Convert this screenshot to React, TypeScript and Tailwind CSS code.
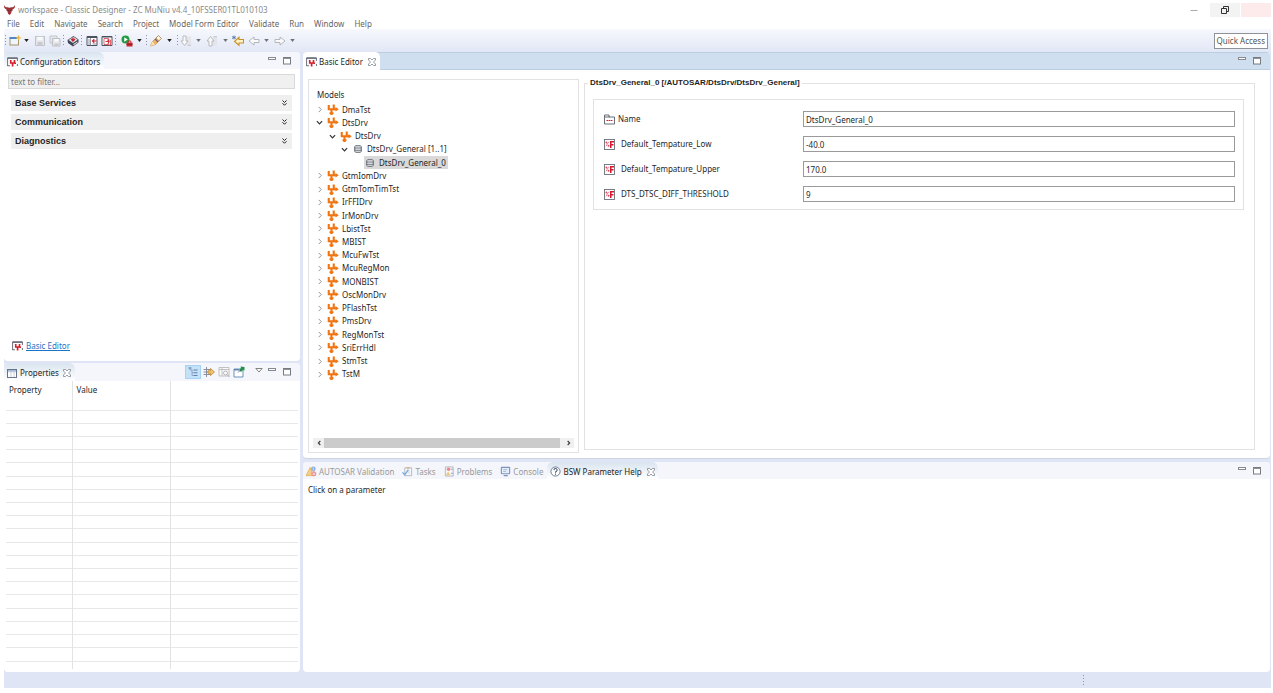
import React, { useState } from "react";

type IconProps = { className?: string };

function Bull() {
  return (
    <svg viewBox="0 0 24 22" className="h-[10px] w-[11px] shrink-0" aria-hidden="true">
      <path d="M0 0c1 4 4 5 8 5l4 1 4-1c4 0 7-1 8-5 .6 5-1 8-4 9l-2 1 2 1-3 2-2 6-3 3-3-3-2-6-3-2 2-1-2-1C1 8-.6 5 0 0z" fill="#9c3236" />
      <path d="M9 11.500l2 1.500M15 11.500l-2 1.500" stroke="#5b2a30" strokeWidth="1.500" />
    </svg>
  );
}

function EditorIcon({ className = "h-[10px] w-[11px]" }: IconProps) {
  return (
    <svg viewBox="0 0 22 20" className={`${className} shrink-0`} aria-hidden="true">
      <path d="M1 1h20v16H1z" fill="#fff" />
      <path d="M1.200 18V2h19.600v6M20.800 14v4M1 17.500h5" fill="none" stroke="#5a606c" strokeWidth="1.800" />
      <path d="M1 1h20v2.500H1z" fill="#5a606c" />
      <path d="M7.500 6v6h7.500V6M11.200 12v7M15 12.500h3" stroke="#d3202c" strokeWidth="3.400" fill="none" />
    </svg>
  );
}

function PropertiesIcon() {
  return (
    <svg viewBox="0 0 20 18" className="h-[9px] w-[10px] shrink-0" aria-hidden="true">
      <rect x="1" y="1" width="18" height="16" fill="#fff" stroke="#66718c" strokeWidth="2" />
      <path d="M2 2h16v3H2z" fill="#a9bad8" />
      <path d="M2 5.500h16M8 6v11M14 6v11" stroke="#a3aec4" strokeWidth="1.200" />
    </svg>
  );
}

function CloseX() {
  return (
    <svg viewBox="0 0 16 16" className="h-2 w-2" aria-hidden="true">
      <path d="M1 1h4l3 3 3-3h4v3l-4 4 4 4v3h-4l-3-3-3 3H1v-3l4-4-4-4z" fill="#fff" stroke="#777c86" strokeWidth="1.500" />
    </svg>
  );
}

function MinIcon() {
  return (
    <svg viewBox="0 0 8 8" className="h-2 w-2" aria-hidden="true">
      <rect x="0.500" y="1.500" width="7" height="2" fill="#fff" stroke="#858a90" />
    </svg>
  );
}

function MaxIcon() {
  return (
    <svg viewBox="0 0 8 8" className="h-2 w-2" aria-hidden="true">
      <rect x="0.500" y="0.500" width="7" height="6.500" fill="#fff" stroke="#777b81" />
      <path d="M0 1.500h8" stroke="#8c9096" />
    </svg>
  );
}

function Caret({ dim }: { dim?: boolean }) {
  return (
    <svg viewBox="0 0 6 4" className="h-[3px] w-[5px]" aria-hidden="true">
      <path d="M0 0h6L3 4z" fill={dim ? "#6f7076" : "#222"} />
    </svg>
  );
}

function ToolIcon({ name }: { name: string }) {
  const art: Record<string, React.ReactNode> = {
    new: (
      <>
        <rect x="2" y="5" width="17" height="15" fill="#eef6fd" stroke="#a08a58" strokeWidth="1.800" />
        <path d="M1.500 4h15v4h-15z" fill="#4f86c6" />
        <path d="M19 1v9M14.500 5.500h9" stroke="#e6b93c" strokeWidth="2.500" />
      </>
    ),
    save: (
      <>
        <path d="M3 3h18v18H3z" fill="#e6e7eb" stroke="#bfc0c6" strokeWidth="2" />
        <path d="M7 3.500h10v7H7z" fill="#fafafc" />
        <path d="M7 14h10v7H7z" fill="#c9cacf" />
      </>
    ),
    saveAll: (
      <>
        <path d="M2 2h14v14H2z" fill="#e6e7eb" stroke="#c4c5cb" strokeWidth="2" />
        <path d="M7 7h15v15H7z" fill="#e6e7eb" stroke="#bfc0c6" strokeWidth="2" />
        <path d="M11 8h8v5h-8z" fill="#fafafc" />
        <path d="M11 17h8v5h-8z" fill="#c9cacf" />
      </>
    ),
    cube: (
      <>
        <path d="M1 10l12-8 10 7v6l-11 8-10-7z" fill="#3f4554" />
        <path d="M3 10l10-6.500 8.500 6L12 16z" fill="#dfe3ea" />
        <path d="M12 5v5M8.500 8l3.500 4 4-4" stroke="#c8202e" strokeWidth="2.600" fill="none" />
        <path d="M13 18l8-5v2l-8 5.500z" fill="#e9ecf1" />
      </>
    ),
    windowArrow: (
      <>
        <path d="M2 3h20v18H2z" fill="#fff" stroke="#4c525f" strokeWidth="2" />
        <path d="M2 3h20v3H2z" fill="#4c525f" />
        <path d="M9 6v15M4 10h4M4 14h4M4 18h4M13 18h8" stroke="#6d7481" strokeWidth="1.500" />
        <path d="M21 12h-7M16.500 8.500L13 12l3.500 3.500" stroke="#cf1f2d" strokeWidth="2.200" fill="none" />
      </>
    ),
    windowSearch: (
      <>
        <path d="M2 3h20v18H2z" fill="#fff" stroke="#4c525f" strokeWidth="2" />
        <path d="M2 3h20v2H2z" fill="#4c525f" />
        <path d="M6 7h9v12H6zM12 10h7v10h-7" stroke="#d8404c" strokeWidth="1.600" fill="none" />
        <path d="M9 13h7M13.500 10l3.500 3.500-3.500 3.500" stroke="#cf1f2d" strokeWidth="1.800" fill="none" />
      </>
    ),
    run: (
      <>
        <circle cx="9" cy="9" r="8" fill="#249a43" />
        <path d="M6.500 4.500l7 4.500-7 4.500z" fill="#fff" />
        <path d="M11 15h12v8H11z" fill="#c62a30" />
        <path d="M14.500 15v-3h5v3" fill="none" stroke="#c62a30" strokeWidth="2" />
        <path d="M11 18.500h12" stroke="#8d1118" strokeWidth="1.500" />
      </>
    ),
    torch: (
      <>
        <path d="M1 22l4-9 8-8 6 6-8 8z" fill="#efb366" stroke="#c98d4b" strokeWidth="1.500" />
        <path d="M12 6l5-5 6 6-6 5z" fill="#fff4d6" stroke="#97795c" strokeWidth="1.500" />
        <path d="M10 8l6 6" stroke="#765f8b" strokeWidth="2.200" />
        <path d="M1 22l4-9 5 6z" fill="#fbe3b4" />
      </>
    ),
    nextNote: (
      <>
        <path d="M11 3h11v16H11z" fill="#e4e5ea" />
        <path d="M6 2h6v10h4l-7 9-7-9h4z" fill="#fafafa" stroke="#b3b4ba" strokeWidth="1.800" />
        <path d="M15 20.500h7" stroke="#b8b9bf" strokeWidth="1.800" fill="none" />
      </>
    ),
    prevNote: (
      <>
        <path d="M11 5h11v16H11z" fill="#e4e5ea" />
        <path d="M6 22h6V12h4L9 3l-7 9h4z" fill="#fafafa" stroke="#b3b4ba" strokeWidth="1.800" />
        <path d="M15 3.500h7" stroke="#b8b9bf" strokeWidth="1.800" fill="none" />
      </>
    ),
    lastEdit: (
      <>
        <path d="M23 9v7H14v4.500L5 13l9-8.500V9z" fill="#fff2c4" stroke="#c4912a" strokeWidth="2.200" />
        <path d="M4 1v8M0 3l8 4M8 3L0 7" stroke="#4669a4" strokeWidth="1.500" />
      </>
    ),
    back: <path d="M22 9v6H12v5l-10-8 10-8v5z" fill="#fafafa" stroke="#aeb0b6" strokeWidth="1.800" />,
    forward: <path d="M2 9v6h10v5l10-8-10-8v5z" fill="#fafafa" stroke="#aeb0b6" strokeWidth="1.800" />,
    tree: (
      <>
        <path d="M6 3v5h5M10 8v11h4M10 13.500h4" stroke="#7d97bb" strokeWidth="1.500" fill="none" />
        <path d="M3 4h6M13 8h8M14 13.500h7M14 19h7" stroke="#55779f" strokeWidth="1.800" />
      </>
    ),
    filter: (
      <>
        <path d="M1 7h14M1 12h10M1 17h14M7 2v20" stroke="#7d8797" strokeWidth="1.800" />
        <path d="M10 9.500h5V5l8 7-8 7v-4.500h-5z" fill="#f3c56a" stroke="#b6812d" strokeWidth="1.500" />
      </>
    ),
    defaults: (
      <>
        <path d="M2 3h20v17H2zM2 7h20M8 3v17" fill="#fafafa" stroke="#bbbbbe" strokeWidth="1.800" />
        <circle cx="15" cy="14" r="4" fill="#fff" stroke="#aaaab0" strokeWidth="1.800" />
        <path d="M18 17l5 5" stroke="#aaaab0" strokeWidth="2" />
      </>
    ),
    pin: (
      <>
        <path d="M2 6h18v16H2z" fill="#fff" stroke="#5f87b6" strokeWidth="1.800" />
        <path d="M2 6h10v3H2z" fill="#5f87b6" />
        <path d="M15 1l8 1v7l-3-1-4 4-4-4 4-4z" fill="#27904a" />
        <path d="M14 9l-4 4" stroke="#44484f" strokeWidth="1.500" />
      </>
    ),
  };
  return (
    <svg viewBox="0 0 24 24" className="h-3 w-3" aria-hidden="true">
      {art[name]}
    </svg>
  );
}

function ForkIcon() {
  return (
    <svg viewBox="0 0 24 22" className="h-[11px] w-3 shrink-0" aria-hidden="true">
      <path d="M3.500 2v8.500h10V1" stroke="#f07410" strokeWidth="4.200" fill="none" />
      <path d="M13 10.500h5M9 11v8" stroke="#f07410" strokeWidth="4.200" />
      <path d="M17 6l6.500 4.500L17 15z" fill="#f07410" />
      <path d="M5 16.500h8v3L10.500 22h-3L5 19.500z" fill="#f07410" />
    </svg>
  );
}

function StackIcon() {
  return (
    <svg viewBox="0 0 16 16" className="mx-[2px] h-2 w-2 shrink-0" aria-hidden="true">
      <path d="M3 1.500h10l1.500 2v9l-1.500 2H3l-1.500-2v-9z" fill="#f2f3f5" stroke="#5e656f" strokeWidth="2" />
      <path d="M1 6h14M1 10.500h14" stroke="#5e656f" strokeWidth="1.800" />
    </svg>
  );
}

function Chevron({ open }: { open?: boolean }) {
  return (
    <svg viewBox="0 0 8 8" className="h-[7px] w-[7px] shrink-0" aria-hidden="true">
      <path d={open ? "M1 2.500l3 3 3-3" : "M3 1L6 4 3 7"} fill="none" stroke={open ? "#333" : "#8f8f8f"} strokeWidth={open ? 1.4 : 1.1} />
    </svg>
  );
}

function FolderIcon() {
  return (
    <svg viewBox="0 0 22 22" className="h-[11px] w-[11px] shrink-0" aria-hidden="true">
      <path d="M1 20V2h9v4h11v14z" fill="#fff" stroke="#565d69" strokeWidth="1.800" />
      <path d="M1 6h10" stroke="#565d69" strokeWidth="1.800" />
      <path d="M5 13h12" stroke="#d3202c" strokeWidth="2.400" strokeDasharray="3.400 1" />
    </svg>
  );
}

function FloatIcon() {
  return (
    <svg viewBox="0 0 22 22" className="h-[11px] w-[11px] shrink-0" aria-hidden="true">
      <rect x="1" y="1" width="20" height="20" fill="#fff" stroke="#6a6f79" strokeWidth="1.800" />
      <path d="M13.500 18V5.500H20M13.500 11.500H19" stroke="#d8172f" strokeWidth="3" fill="none" />
      <path d="M9.500 5.500L4 14.500" stroke="#e0455a" strokeWidth="1.400" />
      <circle cx="4.800" cy="7" r="1.800" fill="#e0455a" />
      <circle cx="9" cy="13.500" r="1.800" fill="#e0455a" />
    </svg>
  );
}

function TabIcon({ name }: { name: string }) {
  const art: Record<string, React.ReactNode> = {
    validation: (
      <>
        <path d="M9 3l8 18H0z" fill="#f3cf85" stroke="#dca94e" strokeWidth="1.500" />
        <circle cx="16" cy="6" r="5" fill="#86a9e6" />
        <circle cx="17" cy="17" r="5.500" fill="#ec8f8f" />
        <path d="M14.500 14.500l5 5M19.500 14.500l-5 5M16 3v6" stroke="#fff" strokeWidth="1.500" />
      </>
    ),
    tasks: (
      <>
        <path d="M6 4h15v17H6z" fill="#f8fafd" stroke="#b4b5ba" strokeWidth="2" />
        <path d="M10 2h7v4h-7z" fill="#d6b98d" />
        <path d="M12 11h6M12 15h6" stroke="#c6cbd6" strokeWidth="1.500" />
        <path d="M1 14l5 5 8-11" fill="none" stroke="#74a9de" strokeWidth="2.800" />
      </>
    ),
    problems: (
      <>
        <path d="M3 2h17v20H3z" fill="#f5f7fb" stroke="#b2b5bd" strokeWidth="2" />
        <circle cx="10" cy="7" r="4" fill="#ea8a8e" />
        <path d="M9 12l5 8H4z" fill="#efc777" />
        <path d="M15 7h5M15 16h5" stroke="#8ca6cf" strokeWidth="2" />
      </>
    ),
    console: (
      <>
        <rect x="3" y="3" width="18" height="14" rx="1" fill="#e7effb" stroke="#7e94c0" strokeWidth="2.500" />
        <path d="M7 8h9M7 12h6" stroke="#8fa2c8" strokeWidth="1.500" />
        <path d="M8 21h9" stroke="#7e94c0" strokeWidth="3" />
      </>
    ),
    help: (
      <>
        <circle cx="12" cy="12" r="10" fill="#fff" stroke="#5b6a80" strokeWidth="1.800" />
        <path d="M8.500 9.500c0-5 7-5 7-.5 0 2.500-3.500 2.500-3.500 5.500M12 16.500v2.500" fill="none" stroke="#3f5878" strokeWidth="2.200" />
      </>
    ),
  };
  return (
    <svg viewBox="0 0 24 24" className="h-[11px] w-[11px] shrink-0" aria-hidden="true">
      {art[name]}
    </svg>
  );
}

type Slot = { kind: "grip" | "icon" | "caret"; width: string; label?: string; icon?: string; dim?: boolean };

const toolbar: Slot[] = [
  { kind: "grip", width: "w-[3px]" },
  { kind: "icon", width: "w-[15px]", icon: "new", label: "New" },
  { kind: "caret", width: "w-[9px]", label: "New menu" },
  { kind: "icon", width: "w-[18px]", icon: "save", label: "Save" },
  { kind: "icon", width: "w-3", icon: "saveAll", label: "Save all" },
  { kind: "grip", width: "w-1" },
  { kind: "icon", width: "w-[15px]", icon: "cube", label: "Generate" },
  { kind: "grip", width: "w-[3px]" },
  { kind: "icon", width: "w-[18px]", icon: "windowArrow", label: "Open configuration" },
  { kind: "icon", width: "w-3", icon: "windowSearch", label: "Open editor" },
  { kind: "grip", width: "w-[5px]" },
  { kind: "icon", width: "w-[18px]", icon: "run", label: "Run" },
  { kind: "caret", width: "w-[6px]", label: "Run menu" },
  { kind: "grip", width: "w-2" },
  { kind: "icon", width: "w-3", icon: "torch", label: "Search" },
  { kind: "caret", width: "w-[14px]", label: "Search menu" },
  { kind: "grip", width: "w-[3px]" },
  { kind: "icon", width: "w-[14px]", icon: "nextNote", label: "Next annotation" },
  { kind: "caret", width: "w-[10px]", label: "Next annotation menu", dim: true },
  { kind: "icon", width: "w-[18px]", icon: "prevNote", label: "Previous annotation" },
  { kind: "caret", width: "w-2", label: "Previous annotation menu", dim: true },
  { kind: "icon", width: "w-[18px]", icon: "lastEdit", label: "Last edit location" },
  { kind: "icon", width: "w-[14px]", icon: "back", label: "Back" },
  { kind: "caret", width: "w-[10px]", label: "Back menu", dim: true },
  { kind: "icon", width: "w-[18px]", icon: "forward", label: "Forward" },
  { kind: "caret", width: "w-[6px]", label: "Forward menu", dim: true },
];

function Grip() {
  return (
    <svg viewBox="0 0 1 11" className="h-[11px] w-px" aria-hidden="true">
      <path d="M0.500 0v11" stroke="#8f9199" strokeDasharray="1 2" />
    </svg>
  );
}

function Toolbar() {
  return (
    <div className="flex h-[23px] shrink-0 items-center bg-linear-to-b from-[#f6f8fc] to-[#e2e7f6]">
      <div role="toolbar" className="flex flex-1 items-center">
        {toolbar.map((s, i) =>
          s.kind === "grip" ? (
            <span key={i} className={`${s.width} flex h-3 items-center justify-center`}>
              <Grip />
            </span>
          ) : (
            <button key={i} aria-label={s.label} className={`${s.width} flex h-3 items-center justify-center`}>
              {s.kind === "icon" ? <ToolIcon name={s.icon!} /> : <Caret dim={s.dim} />}
            </button>
          )
        )}
      </div>
      <button className="mr-[3px] h-4 border border-[#8f9297] bg-white px-[2px] leading-[14px] text-[#555]">Quick Access</button>
    </div>
  );
}

function PaneButtons() {
  return (
    <div className="flex items-center gap-[7px]">
      <button aria-label="Minimize" className="pb-[2px]">
        <MinIcon />
      </button>
      <button aria-label="Maximize">
        <MaxIcon />
      </button>
    </div>
  );
}

type TreeNode = { label: string; level: 0 | 1 | 2 | 3; open?: boolean; selected?: boolean };

const tree: TreeNode[] = [
  { label: "DmaTst", level: 0 },
  { label: "DtsDrv", level: 0, open: true },
  { label: "DtsDrv", level: 1, open: true },
  { label: "DtsDrv_General [1..1]", level: 2, open: true },
  { label: "DtsDrv_General_0", level: 3, selected: true },
  { label: "GtmIomDrv", level: 0 },
  { label: "GtmTomTimTst", level: 0 },
  { label: "IrFFIDrv", level: 0 },
  { label: "IrMonDrv", level: 0 },
  { label: "LbistTst", level: 0 },
  { label: "MBIST", level: 0 },
  { label: "McuFwTst", level: 0 },
  { label: "McuRegMon", level: 0 },
  { label: "MONBIST", level: 0 },
  { label: "OscMonDrv", level: 0 },
  { label: "PFlashTst", level: 0 },
  { label: "PmsDrv", level: 0 },
  { label: "RegMonTst", level: 0 },
  { label: "SriErrHdl", level: 0 },
  { label: "StmTst", level: 0 },
  { label: "TstM", level: 0 },
];

const indents = ["pl-0", "pl-[13px]", "pl-[25px]", "pl-[37px]"];

function ModelTree() {
  return (
    <ul role="tree" aria-label="Models" className="grid h-[278px] shrink-0 auto-rows-fr pl-[7px]">
      {tree.map((n, i) => (
        <li key={i} role="treeitem" aria-selected={!!n.selected} className={`${indents[n.level]} flex items-center`}>
          <span className="flex w-[11px] shrink-0">{n.level < 3 && <Chevron open={n.open} />}</span>
          <span className={`${n.selected ? "bg-[#d9d9d9]" : ""} flex h-[13px] items-center gap-[3px] pr-[2px]`}>
            {n.level < 2 ? <ForkIcon /> : <StackIcon />}
            {n.label}
          </span>
        </li>
      ))}
    </ul>
  );
}

const fields = [
  { id: "name", label: "Name", value: "DtsDrv_General_0" },
  { id: "low", label: "Default_Tempature_Low", value: "-40.0" },
  { id: "upper", label: "Default_Tempature_Upper", value: "170.0" },
  { id: "threshold", label: "DTS_DTSC_DIFF_THRESHOLD", value: "9" },
];

function ParameterForm() {
  const [values, setValues] = useState(fields.map((f) => f.value));
  return (
    <fieldset className="-mt-[2px] flex min-w-0 flex-1 flex-col border border-[#e2e2e2] px-2">
      <legend className="-ml-[5px] px-[2px] font-[Liberation_Sans] font-bold leading-3">
        DtsDrv_General_0 [/AUTOSAR/DtsDrv/DtsDrv_General]
      </legend>
      <div className="mt-[10px] mr-[2px] flex flex-col gap-[9px] border border-[#e2e2e2] pt-[11px] pr-2 pb-[7px] pl-[10px]">
        {fields.map((f, i) => (
          <div key={f.id} className="flex h-4 items-center">
            <label htmlFor={f.id} className={`${i === 0 ? "gap-[3px]" : "gap-[6px]"} flex w-[199px] shrink-0 items-center`}>
              {i === 0 ? <FolderIcon /> : <FloatIcon />}
              {f.label}
            </label>
            <input
              id={f.id}
              value={values[i]}
              onChange={(e) => setValues(values.map((v, j) => (j === i ? e.target.value : v)))}
              className="h-4 min-w-0 flex-1 border border-[#9a9a9a] bg-white px-[2px] outline-none"
            />
          </div>
        ))}
      </div>
    </fieldset>
  );
}

function ConfigurationEditors() {
  return (
    <section className="flex min-h-0 flex-[309_1_0%] flex-col overflow-hidden rounded-[4px] bg-white">
      <header className="flex h-[17px] shrink-0 items-center justify-between bg-[#f4f6fc] pr-[9px]">
        <h2 className="flex h-full items-center gap-[2px] rounded-tr-[6px] bg-linear-to-b from-[#d9e4ef] to-white pt-[2px] pr-1 pl-[3px]">
          <EditorIcon />
          Configuration Editors
        </h2>
        <PaneButtons />
      </header>
      <div className="flex flex-1 flex-col px-1 pt-[5px]">
        <input
          aria-label="Filter"
          placeholder="text to filter..."
          className="mr-px h-[15px] border border-[#d9d9d9] bg-[#f0f0f0] px-[2px] outline-none placeholder:text-[#777]"
        />
        <div className="mt-[6px] mr-1 ml-[3px] flex flex-col gap-[3px]">
          {["Base Services", "Communication", "Diagnostics"].map((t) => (
            <button key={t} className="flex h-4 items-center justify-between bg-[#efefef] pr-[5px] pl-1 font-[Liberation_Sans] text-[9px] font-bold">
              {t}
              <svg viewBox="0 0 10 12" className="h-[6px] w-[5px]" aria-hidden="true">
                <path d="M1 1l4 4 4-4M1 6.500l4 4 4-4" fill="none" stroke="#222" strokeWidth="2" />
              </svg>
            </button>
          ))}
        </div>
        <a href="#basic-editor" className="mt-auto mb-[9px] ml-1 flex items-center gap-[3px] self-start text-[#1a74c8]">
          <EditorIcon />
          <span className="underline">Basic Editor</span>
        </a>
      </div>
    </section>
  );
}

function Properties() {
  return (
    <section className="flex min-h-0 flex-[309_1_0%] flex-col overflow-hidden rounded-[4px] bg-white">
      <header className="flex h-[18px] shrink-0 items-center justify-between bg-[#f4f6fc] pr-[9px]">
        <div className="flex h-full items-center rounded-tr-[6px] bg-linear-to-b from-[#d9e4ef] to-white pt-[2px] pr-1 pl-[3px]">
          <h2 className="flex items-center gap-[3px]">
            <PropertiesIcon />
            Properties
          </h2>
          <button aria-label="Close Properties" className="ml-1">
            <CloseX />
          </button>
        </div>
        <div className="flex items-center">
          <div className="mr-[9px] flex items-center">
            <button aria-label="Show categories" className="flex h-[14px] w-4 items-center justify-center border border-[#a5d2f7] bg-[#c5e1f8]">
              <ToolIcon name="tree" />
            </button>
            {["filter", "defaults", "pin"].map((n) => (
              <button key={n} aria-label={n} className="flex w-[15px] justify-center">
                <ToolIcon name={n} />
              </button>
            ))}
          </div>
          <button aria-label="View menu" className="mr-[5px] pb-[3px]">
            <svg viewBox="0 0 8 5" className="h-[5px] w-2" aria-hidden="true">
              <path d="M0.800 0.500h6.400L4 4z" fill="#fff" stroke="#777" strokeWidth="0.900" />
            </svg>
          </button>
          <PaneButtons />
        </div>
      </header>
      <div className="px-[2px]">
        <table className="h-[288px] w-full table-fixed border-collapse text-left">
          <colgroup>
            <col className="w-[66px]" />
            <col className="w-[98px]" />
            <col />
          </colgroup>
          <thead>
            <tr className="h-[29px] border-b border-[#e8e8e8] align-top">
              <th className="border-r border-[#e3e3e3] px-[3px] pt-[3px] font-normal">Property</th>
              <th className="border-r border-[#e3e3e3] px-1 pt-[3px] font-normal">Value</th>
              <td />
            </tr>
          </thead>
          <tbody>
            {Array.from({ length: 19 }, (_, i) => (
              <tr key={i} className="border-b border-[#e8e8e8]">
                <td className="border-r border-[#e3e3e3]" />
                <td className="border-r border-[#e3e3e3]" />
                <td />
              </tr>
            ))}
            <tr className="h-2">
              <td className="border-r border-[#e3e3e3]" />
              <td className="border-r border-[#e3e3e3]" />
              <td />
            </tr>
          </tbody>
        </table>
      </div>
    </section>
  );
}

function BasicEditor() {
  return (
    <section className="flex min-h-0 flex-[407_1_0%] flex-col overflow-hidden rounded-[4px] border-b border-[#cdd3df] bg-white">
      <header className="flex h-[18px] shrink-0 items-center justify-between border-y border-[#bccfe2] bg-[#cfdfef] pr-[9px]">
        <div className="flex h-[18px] items-center rounded-tr-[5px] bg-white pt-[2px] pr-1 pl-[3px]">
          <h2 className="flex items-center gap-[2px]">
            <EditorIcon />
            Basic Editor
          </h2>
          <button aria-label="Close Basic Editor" className="ml-[5px]">
            <CloseX />
          </button>
        </div>
        <PaneButtons />
      </header>
      <div className="flex min-h-0 flex-1 gap-[5px] pt-[9px] pr-[15px] pb-[5px] pl-[5px]">
        <div className="flex w-[271px] shrink-0 flex-col border border-[#e2e2e2]">
          <h3 className="mt-[9px] ml-2 h-[14px] leading-[12px]">Models</h3>
          <ModelTree />
          <div className="mt-auto mr-1 mb-1 ml-1 flex h-[10px] items-center bg-[#f0f0f0]">
            <button aria-label="Scroll left" className="flex w-[11px] justify-center">
              <svg viewBox="0 0 6 8" className="h-[6px] w-1" aria-hidden="true">
                <path d="M5 1L2 4l3 3" fill="none" stroke="#333" strokeWidth="1.600" />
              </svg>
            </button>
            <div className="flex-1">
              <div className="h-[10px] bg-[#cbcbcb]" />
            </div>
            <button aria-label="Scroll right" className="ml-[3px] flex w-[11px] justify-center">
              <svg viewBox="0 0 6 8" className="h-[6px] w-1" aria-hidden="true">
                <path d="M1 1l3 3-3 3" fill="none" stroke="#333" strokeWidth="1.600" />
              </svg>
            </button>
          </div>
        </div>
        <div className="mb-[3px] flex min-w-0 flex-1">
          <ParameterForm />
        </div>
      </div>
    </section>
  );
}

const bottomTabs = [
  { icon: "validation", label: "AUTOSAR Validation" },
  { icon: "tasks", label: "Tasks" },
  { icon: "problems", label: "Problems" },
  { icon: "console", label: "Console" },
];

function BottomPanel() {
  return (
    <section className="flex min-h-0 flex-[210_1_0%] flex-col overflow-hidden rounded-[4px] bg-white">
      <header className="flex h-[17px] shrink-0 items-center justify-between bg-[#f4f6fc] pr-[9px]">
        <div role="tablist" className="flex h-full items-center gap-2 pl-[3px]">
          {bottomTabs.map((t) => (
            <button key={t.label} role="tab" aria-selected="false" className="flex items-center gap-[2px] pt-[2px] text-[#999]">
              <TabIcon name={t.icon} />
              {t.label}
            </button>
          ))}
          <div className="-ml-1 flex h-full items-center rounded-t-[6px] bg-linear-to-b from-[#d9e4ef] to-white px-[3px] pt-[2px]">
            <button role="tab" aria-selected="true" className="flex items-center gap-[2px]">
              <TabIcon name="help" />
              BSW Parameter Help
            </button>
            <button aria-label="Close BSW Parameter Help" className="ml-[5px]">
              <CloseX />
            </button>
          </div>
        </div>
        <PaneButtons />
      </header>
      <p className="px-[5px] pt-[5px]">Click on a parameter</p>
    </section>
  );
}

const menus = ["File", "Edit", "Navigate", "Search", "Project", "Model Form Editor", "Validate", "Run", "Window", "Help"];

export default function App() {
  return (
    <div className="flex h-screen min-h-[600px] flex-col bg-white pr-[2px] pb-[5px] pl-1 font-['Noto_Sans',sans-serif] text-[8px] leading-3 text-[#1f1f1f]">
      <div className="flex h-[18px] shrink-0 items-center justify-between pt-[2px] text-[#8a8a8a]">
        <h1 className="flex items-center gap-[3px]">
          <Bull />
          workspace - Classic Designer - ZC MuNiu v4.4_10FSSER01TL010103
        </h1>
        <div className="flex h-[14px] gap-px">
          <button aria-label="Minimize window" className="flex w-[30px] items-center justify-center">
            <svg viewBox="0 0 8 8" className="h-2 w-2" aria-hidden="true">
              <path d="M0.500 4.500h7" stroke="#aaa" />
            </svg>
          </button>
          <button aria-label="Restore window" className="flex w-[30px] items-center justify-center bg-[#f3f3f3]">
            <svg viewBox="0 0 8 8" className="h-2 w-2" aria-hidden="true">
              <path d="M0.500 2.500h5v5h-5zM2.500 2.500v-2h5v5h-2" fill="none" stroke="#333" />
            </svg>
          </button>
          <button aria-label="Close window" className="w-[30px] bg-[#fdeaea]" />
        </div>
      </div>
      <nav className="flex h-[11px] shrink-0 items-center gap-[10px] pl-[3px] text-[#666]">
        {menus.map((m) => (
          <button key={m}>{m}</button>
        ))}
      </nav>
      <Toolbar />
      <main className="flex min-h-0 flex-1 gap-[3px] bg-[#dfe5f5] pr-px">
        <div className="flex w-[296px] shrink-0 flex-col gap-[2px]">
          <ConfigurationEditors />
          <Properties />
        </div>
        <div className="flex min-w-0 flex-1 flex-col gap-[3px]">
          <BasicEditor />
          <BottomPanel />
        </div>
      </main>
      <footer className="flex h-4 shrink-0 items-center justify-end bg-[#dfe5f5] pr-[187px]">
        <Grip />
      </footer>
    </div>
  );
}
